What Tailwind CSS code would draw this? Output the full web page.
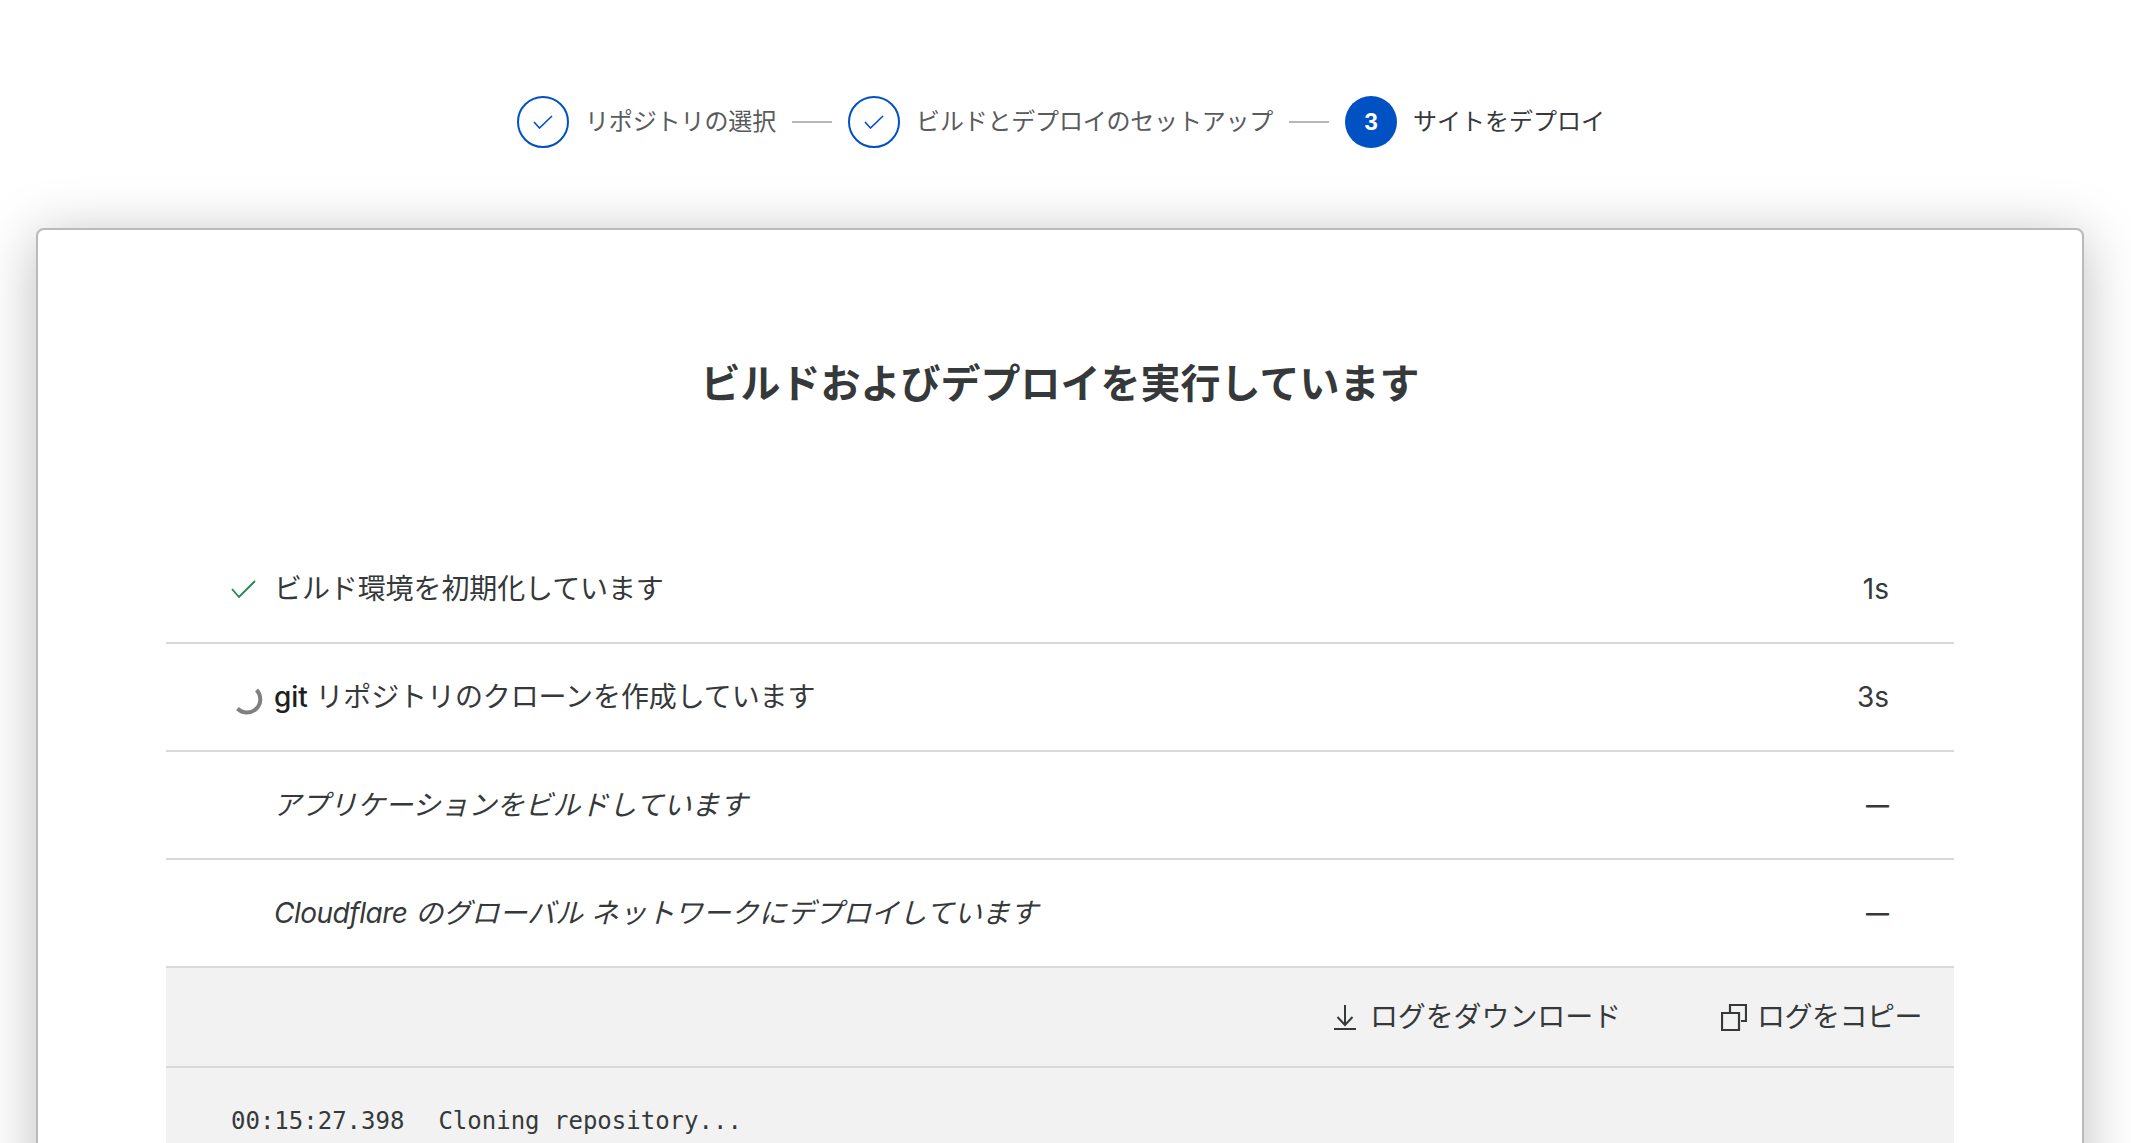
<!DOCTYPE html>
<html lang="ja">
  <head>
    <meta charset="UTF-8" />
    <meta name="viewport" content="width=device-width, initial-scale=1.0" />
    <title>Cloudflare Pages deploy</title>
    <script src="https://cdn.jsdelivr.net/npm/@tailwindcss/browser@4"></script>
  </head>

  <body class="h-[1143px] overflow-hidden bg-white font-['Inter','Noto_Sans_CJK_JP',sans-serif] text-[#36393a]">
    <div class="w-[2120px]">
      <!-- steps -->
      <div class="flex items-center justify-center pt-[96px] pl-[2px] h-[228px] pb-[80px] text-[24px] leading-[32px]">
        <div class="flex items-center gap-4 text-[#595b5c]">
          <div class="flex h-[52px] w-[52px] items-center justify-center rounded-full border-2 border-[#0051c3]">
            <svg class="h-[14px] w-[20px]" viewBox="0 0 20 14" fill="none" stroke="#0051c3" stroke-width="1.6"><path d="M1 7l5.5 6L19 1" /></svg>
          </div>
          <span class="tracking-[-0.1px]">リポジトリの選択</span>
          <div class="h-[2px] w-[40px] bg-[#b7b7b7]"></div>
        </div>
        <div class="ml-4 flex items-center gap-4 text-[#595b5c]">
          <div class="flex h-[52px] w-[52px] items-center justify-center rounded-full border-2 border-[#0051c3]">
            <svg class="h-[14px] w-[20px]" viewBox="0 0 20 14" fill="none" stroke="#0051c3" stroke-width="1.6"><path d="M1 7l5.5 6L19 1" /></svg>
          </div>
          <span class="tracking-[-0.2px]">ビルドとデプロイのセットアップ</span>
          <div class="h-[2px] w-[40px] bg-[#b7b7b7]"></div>
        </div>
        <div class="ml-4 flex items-center gap-4">
          <div class="flex h-[52px] w-[52px] items-center justify-center rounded-full bg-[#0051c3] font-['Liberation_Sans'] text-[24px] font-bold text-white">3</div>
          <span>サイトをデプロイ</span>
        </div>
      </div>

      <!-- card -->
      <div class="mx-[36px] rounded-lg border-2 border-[#b7bbbd] bg-white px-[128px] pt-[126px] shadow-[0_8px_56px_rgba(0,0,0,0.26)]">
        <h1 class="mb-[124px] text-center text-[40px] leading-[56px] font-semibold">ビルドおよびデプロイを実行しています</h1>

        <div class="flex h-[108px] items-center justify-between border-b-2 border-[#d9d9d9] pr-[65px] pl-[65px] text-[28px]">
          <div class="flex items-center gap-[18px]">
            <svg class="h-[18px] w-[25px]" viewBox="0 0 25 18" fill="none" stroke="#1d8a4a" stroke-width="1.8"><path d="M1 9l7 8L24 1" /></svg>
            <span class="tracking-[-0.1px]">ビルド環境を初期化しています</span>
          </div>
          <span>1s</span>
        </div>

        <div class="flex h-[108px] items-center justify-between border-b-2 border-[#d9d9d9] pr-[65px] pl-[65px] text-[28px]">
          <div class="flex items-center gap-[13px]">
            <svg class="mt-[8px] ml-[2px] h-[28px] w-[28px] overflow-visible" viewBox="0 0 28 28" fill="none" stroke="#808080" stroke-width="4"><path d="M23.5 3A12 12 0 0 1 4.5 21.5" /></svg>
            <span class="tracking-[-0.1px]"><span class="font-medium text-[#1d1f20]">git</span> リポジトリのクローンを作成しています</span>
          </div>
          <span>3s</span>
        </div>

        <div class="flex h-[108px] items-center justify-between border-b-2 border-[#d9d9d9] pr-[65px] pl-[107px] text-[28px]">
          <span class="italic">アプリケーションをビルドしています</span>
          <span class="text-[23px] font-semibold">—</span>
        </div>

        <div class="flex h-[108px] items-center justify-between border-b-2 border-[#d9d9d9] pr-[65px] pl-[108px] text-[28px]">
          <span class="italic"><span class="tracking-[-0.5px]">Cloudflare</span> のグローバル ネットワークにデプロイしています</span>
          <span class="text-[23px] font-semibold">—</span>
        </div>

        <!-- log -->
        <div class="bg-[#f2f2f2]">
          <div class="flex h-[100px] items-center justify-end gap-[100px] border-b-2 border-[#d9d9d9] pr-[32px] text-[28px]">
            <button class="flex items-center gap-[13px]">
              <svg class="h-[26px] w-[24px]" viewBox="0 0 24 26" fill="none" stroke="#36393a" stroke-width="2"><path d="M12 1v20M4.5 13l7.5 8 7.5-8M1 25h22" /></svg>
              <span class="tracking-[-0.1px]">ログをダウンロード</span>
            </button>
            <button class="flex items-center gap-[10px]">
              <svg class="h-[27px] w-[26px]" viewBox="0 0 26 27" fill="none" stroke="#36393a" stroke-width="2.2"><path d="M1 9h17v17H1zM9 9V1h16v16h-5" /></svg>
              <span class="tracking-[-0.5px]">ログをコピー</span>
            </button>
          </div>
          <div class="flex h-[200px] gap-[34px] pt-[37px] pl-[65px] font-['DejaVu_Sans_Mono',monospace] text-[24px] leading-[32px]">
            <span>00:15:27.398</span>
            <span>Cloning repository...</span>
          </div>
        </div>
      </div>
    </div>
  </body>
</html>
